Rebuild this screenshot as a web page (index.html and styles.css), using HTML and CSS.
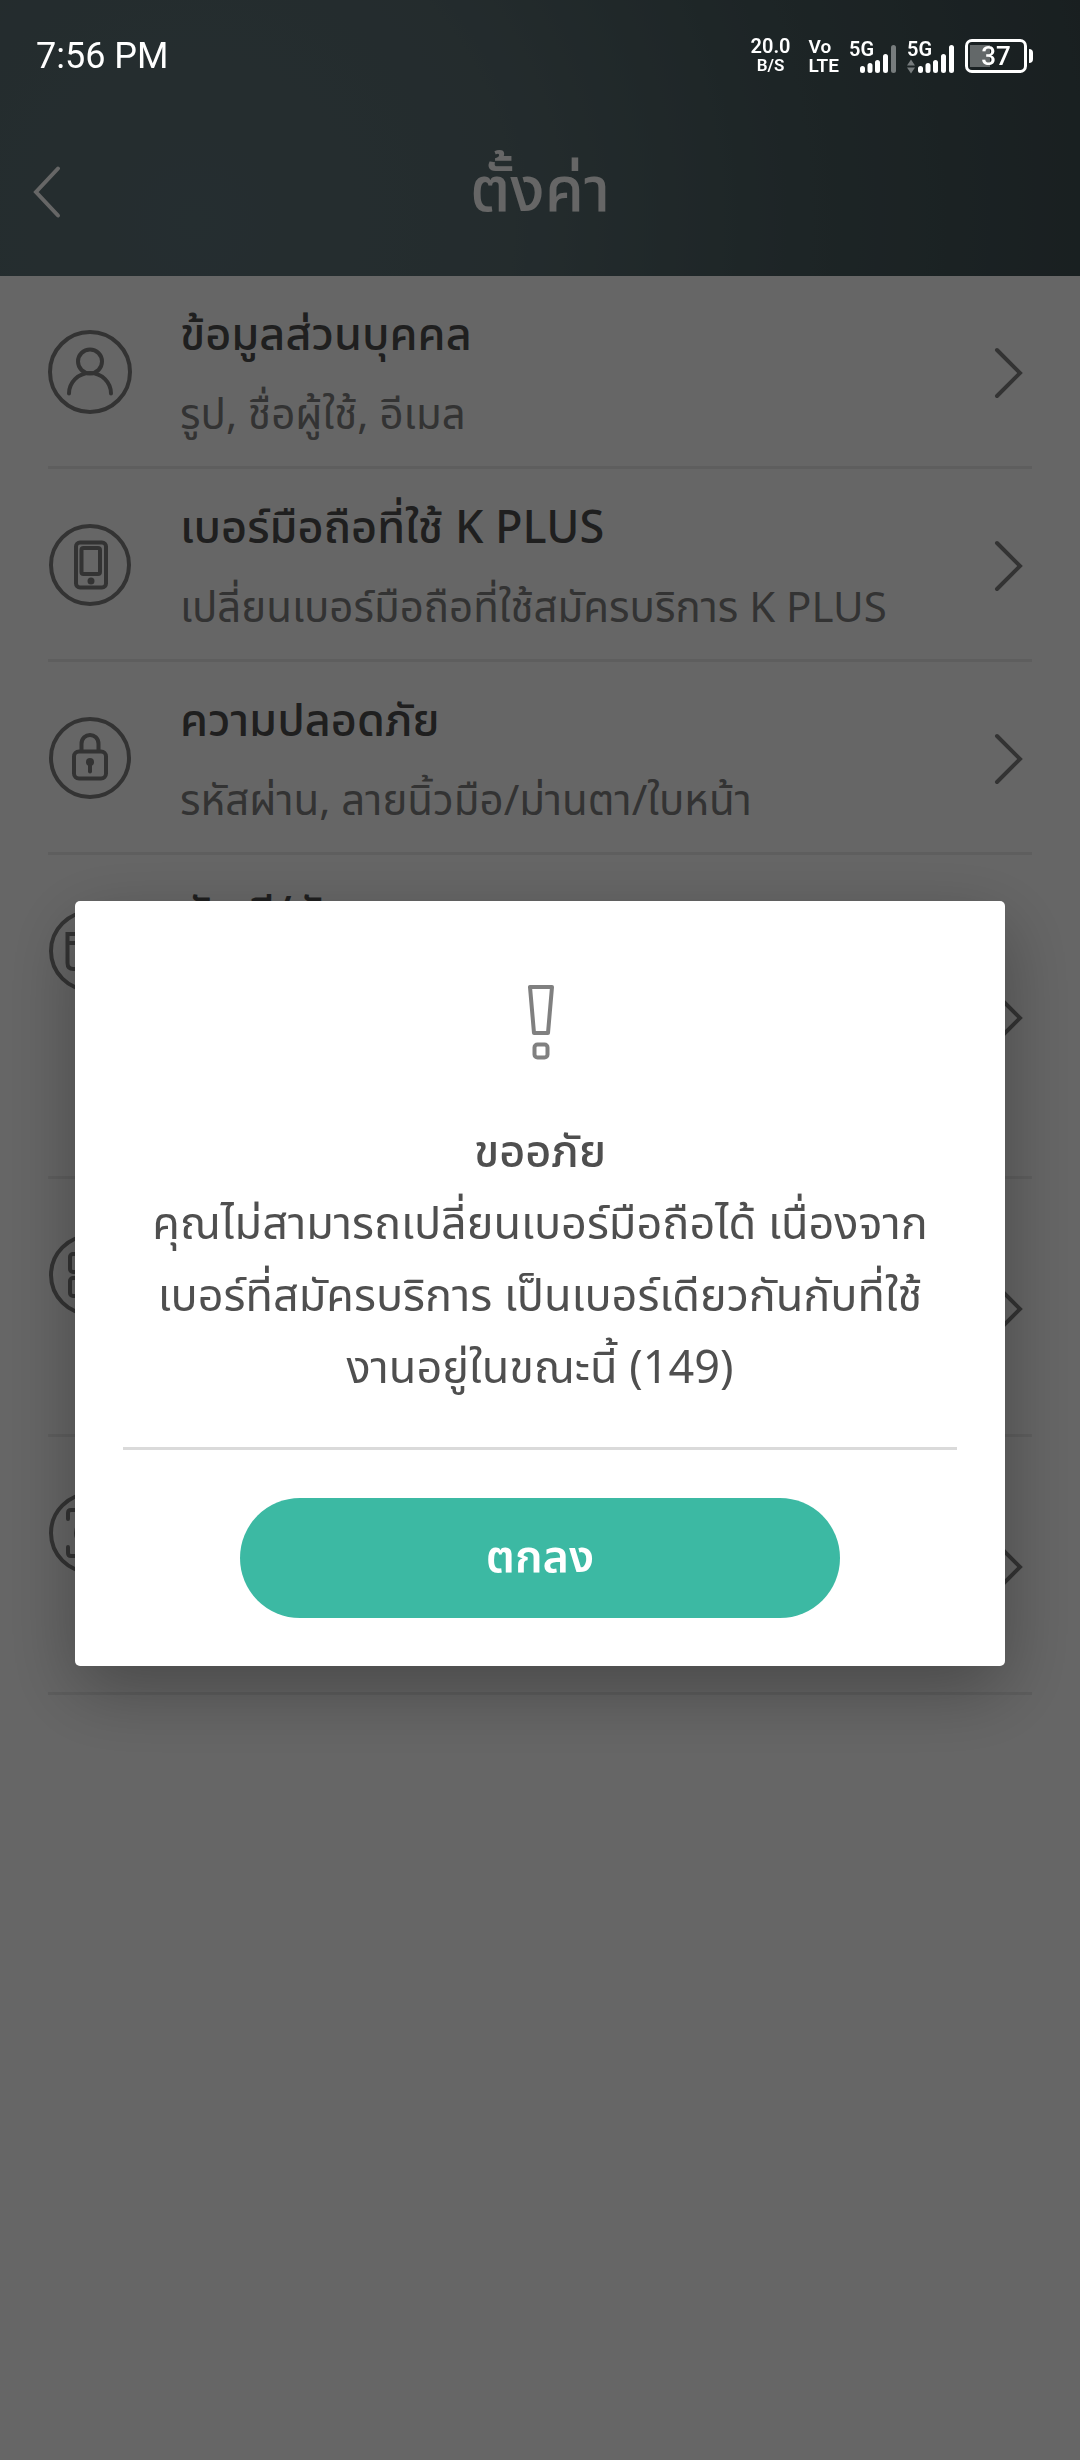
FILE: index.html
```html
<!DOCTYPE html>
<html lang="th">
<head>
  <meta charset="UTF-8" />
  <title>ตั้งค่า</title>
  <meta name="viewport" content="width=device-width, initial-scale=1.0"/>
  <link rel="stylesheet" href="styles.css">
</head>
<body>

  <header>
    <div class="status-bar">
      <div class="clock">7:56 PM</div>
      <div class="status-icons">
        <div class="stack speed"><span>20.0</span><small>B/S</small></div>
        <div class="stack volte"><span>Vo</span><span>LTE</span></div>
        <div class="signal">
          <span>5G</span>
          <svg width="48" height="36" viewBox="0 0 48 36" fill="none" stroke="#fff" stroke-width="5" stroke-linecap="round">
            <path d="M13.500 30.500v2M21 27.500v5M28.500 24.500v8M36.500 18.500v14"/>
            <path d="M44.500 9.500v23" stroke="#777c7d"/>
          </svg>
        </div>
        <div class="signal">
          <span>5G</span>
          <svg width="48" height="36" viewBox="0 0 48 36" fill="none" stroke="#fff" stroke-width="5" stroke-linecap="round">
            <path d="M0 27.500l4-6 4 6zM0 29.500l4 6 4-6z" fill="#777c7d" stroke="none"/>
            <path d="M13.500 30.500v2M21 27.500v5M28.500 24.500v8M36.500 18.500v14M44.500 9.500v23"/>
          </svg>
        </div>
        <div class="battery"><span>37</span></div>
      </div>
    </div>
    <div class="title-bar">
      <button class="back-btn" aria-label="Back">
        <svg width="28" height="52" viewBox="0 0 28 52"><path d="M25 2.500L3 26l22 23.500"/></svg>
      </button>
      <h1>ตั้งค่า</h1>
    </div>
  </header>

  <main class="menu">
    <a class="menu-item" href="#">
      <svg class="icon" viewBox="0 0 84 84">
        <circle cx="42" cy="42" r="40"/>
        <circle cx="42" cy="31.500" r="12"/>
        <path d="M21 63.500c0-11 9-20.500 21-20.500s21 9.500 21 20.500"/>
      </svg>
      <div class="text">
        <h2>ข้อมูลส่วนบุคคล</h2>
        <p>รูป, ชื่อผู้ใช้, อีเมล</p>
      </div>
      <svg class="arrow" viewBox="0 0 28 50"><path d="M2 2l23 23L2 48"/></svg>
    </a>
    <a class="menu-item" href="#">
      <svg class="icon" viewBox="0 0 84 84">
        <circle cx="42" cy="42" r="39"/>
        <rect x="28" y="19.500" width="30" height="45" rx="4"/>
        <rect x="33.500" y="25" width="18.500" height="26" rx="2"/>
        <circle class="dot" cx="43" cy="58" r="3.500"/>
      </svg>
      <div class="text">
        <h2>เบอร์มือถือที่ใช้ K PLUS</h2>
        <p>เปลี่ยนเบอร์มือถือที่ใช้สมัครบริการ K PLUS</p>
      </div>
      <svg class="arrow" viewBox="0 0 28 50"><path d="M2 2l23 23L2 48"/></svg>
    </a>
    <a class="menu-item" href="#">
      <svg class="icon" viewBox="0 0 84 84">
        <circle cx="42" cy="42" r="39"/>
        <rect x="26" y="35.500" width="32" height="27" rx="5"/>
        <path d="M33.500 35v-7c0-12 17-12 17 0v7"/>
        <circle class="dot" cx="42" cy="46" r="4"/>
        <path d="M42 47v8.500"/>
      </svg>
      <div class="text">
        <h2>ความปลอดภัย</h2>
        <p>รหัสผ่าน, ลายนิ้วมือ/ม่านตา/ใบหน้า</p>
      </div>
      <svg class="arrow" viewBox="0 0 28 50"><path d="M2 2l23 23L2 48"/></svg>
    </a>
    <a class="menu-item tall" href="#">
      <svg class="icon" viewBox="0 0 84 84">
        <circle cx="42" cy="42" r="39"/>
        <path d="M19.500 25h45v29q0 6-6 6h-33q-6 0-6-6zM19.500 34h45"/>
      </svg>
      <div class="text">
        <h2>บัญชี/บัตร</h2>
      </div>
      <svg class="arrow" viewBox="0 0 28 50"><path d="M2 2l23 23L2 48"/></svg>
    </a>
    <a class="menu-item medium" href="#" aria-label="QR">
      <svg class="icon" viewBox="0 0 84 84">
        <circle cx="42" cy="42" r="39"/>
        <rect x="22" y="21" width="17" height="18" rx="3"/>
        <rect x="22" y="45" width="17" height="18" rx="3"/>
        <rect x="45" y="21" width="17" height="18" rx="3"/>
        <rect x="45" y="45" width="17" height="18" rx="3"/>
      </svg>
      <div class="text"></div>
      <svg class="arrow" viewBox="0 0 28 50"><path d="M2 2l23 23L2 48"/></svg>
    </a>
    <a class="menu-item medium" href="#" aria-label="Scan">
      <svg class="icon" viewBox="0 0 84 84">
        <circle cx="42" cy="42" r="39"/>
        <path d="M20 28v-6q0-3 3-3h8M20 56v6q0 3 3 3h8M64 28v-6q0-3-3-3h-8M64 56v6q0 3-3 3h-8"/>
        <circle cx="42" cy="42" r="14"/>
      </svg>
      <div class="text"></div>
      <svg class="arrow" viewBox="0 0 28 50"><path d="M2 2l23 23L2 48"/></svg>
    </a>
  </main>

  <div class="overlay">
    <div class="modal" role="alertdialog" aria-labelledby="alertTitle" aria-describedby="alertText">
      <svg class="alert-icon" width="26" height="76" viewBox="0 0 26 76">
        <path d="M3 2h22l-4 46H7z"/>
        <rect x="7.500" y="59.500" width="13" height="13" rx="3"/>
      </svg>
      <h3 id="alertTitle">ขออภัย</h3>
      <p id="alertText">คุณไม่สามารถเปลี่ยนเบอร์มือถือได้ เนื่องจาก<br>เบอร์ที่สมัครบริการ เป็นเบอร์เดียวกันกับที่ใช้<br>งานอยู่ในขณะนี้ (149)</p>
      <hr>
      <button class="ok-btn">ตกลง</button>
    </div>
  </div>

</body>
</html>
```
FILE: styles.css
```css
:root {
  --text: #4f4f4f;
  --muted: #808080;
  --line: #ebebeb;
  --green: #3cb9a3;
}

* {
  box-sizing: border-box;
}

body {
  margin: 0;
  min-height: 100vh;
  background-color: #fff;
  color: var(--text);
  font-family: "Noto Sans Thai", "Noto Sans", sans-serif;
}

h1, h2, h3, p {
  margin: 0;
  font-weight: 500;
}

svg {
  display: block;
  flex-shrink: 0;
  overflow: visible;
}

header {
  background: radial-gradient(circle at 18% 80%, #5e7379 0%, #5a6e72 35%, #4a5d60 65%, #3f4f52 100%);
  color: #fff;
}

/* status bar stays above the dimmed page */
.status-bar {
  position: relative;
  z-index: 2;
  height: 107px;
  padding: 4px 47px 0 36px;
  display: flex;
  justify-content: space-between;
  align-items: center;
  font-family: Roboto, sans-serif;
}

.clock {
  font-size: 36px;
}

.status-icons {
  display: flex;
  align-items: center;
  gap: 10px;
  font-weight: 600;
}

.stack {
  display: flex;
  flex-direction: column;
  font-size: 19px;
  line-height: 19px;
}

.speed {
  align-items: center;
  margin-right: 8px;
}

.speed span {
  font-size: 20px;
}

.speed small {
  font-size: 17px;
}

.signal {
  position: relative;
}

.signal span {
  position: absolute;
  top: 1px;
  left: 0;
  font-size: 20px;
  line-height: 20px;
}

.battery {
  position: relative;
  width: 62px;
  height: 34px;
  margin-right: 6px;
  border: 3px solid #fff;
  border-radius: 7px;
  font-size: 26px;
  font-weight: 500;
  line-height: 28px;
  text-align: center;
  background: linear-gradient(#636869, #636869) 2px 3px / 20px 22px no-repeat;
}

.battery::after {
  content: "";
  position: absolute;
  top: 7px;
  right: -9px;
  width: 4px;
  height: 14px;
  border-radius: 0 4px 4px 0;
  background-color: #fff;
}

.title-bar {
  height: 169px;
  padding: 0 33px;
  display: grid;
  grid-template-columns: 60px 1fr 60px;
  align-items: center;
}

.title-bar h1 {
  font-size: 63px;
  line-height: 84px;
  text-align: center;
}

.back-btn {
  padding: 0;
  border: none;
  background: none;
  cursor: pointer;
}

.back-btn path {
  fill: none;
  stroke: #fff;
  stroke-width: 4;
  stroke-linecap: round;
}

.menu {
  padding: 0 48px;
}

.menu-item {
  display: flex;
  gap: 48px;
  min-height: 193px;
  padding: 24px 9px 20px 0;
  border-bottom: 3px solid var(--line);
  color: inherit;
  text-decoration: none;
}

.menu-item.tall {
  min-height: 324px;
}

.menu-item.medium {
  min-height: 258px;
}

.menu-item .text {
  flex: 1;
}

.menu-item h2 {
  margin-bottom: 14px;
  font-size: 45px;
  line-height: 72px;
}

.menu-item p {
  font-size: 42px;
  font-weight: 400;
  line-height: 60px;
  color: var(--muted);
}

.icon {
  width: 84px;
  height: 84px;
  margin-top: 30px;
  fill: none;
  stroke: var(--muted);
  stroke-width: 4;
  stroke-linecap: round;
}

.icon .dot {
  fill: var(--muted);
  stroke: none;
}

.arrow {
  width: 28px;
  height: 50px;
  align-self: center;
  fill: none;
  stroke: var(--muted);
  stroke-width: 4;
  stroke-linecap: round;
}

.overlay {
  position: fixed;
  inset: 0;
  z-index: 1;
  padding: 107px 75px 0;
  display: flex;
  align-items: center;
  justify-content: center;
  background-color: rgba(0, 0, 0, 0.6);
}

.modal {
  flex: 1;
  padding: 84px 48px 48px;
  display: flex;
  flex-direction: column;
  align-items: center;
  border-radius: 5px;
  background-color: #fff;
  box-shadow: 0 24px 72px rgba(0, 0, 0, 0.3);
  text-align: center;
}

.alert-icon {
  margin-bottom: 56px;
  fill: none;
  stroke: var(--muted);
  stroke-width: 4;
  stroke-linejoin: round;
}

.modal h3 {
  font-size: 45px;
  line-height: 72px;
}

.modal p {
  font-size: 45px;
  font-weight: 400;
  line-height: 72px;
}

.modal hr {
  width: 100%;
  margin: 42px 0 48px;
  border: none;
  border-top: 3px solid #dadada;
}

.ok-btn {
  width: 72%;
  height: 120px;
  border: none;
  border-radius: 60px;
  background-color: var(--green);
  color: #fff;
  font-family: inherit;
  font-size: 45px;
  font-weight: 600;
  cursor: pointer;
}
```
